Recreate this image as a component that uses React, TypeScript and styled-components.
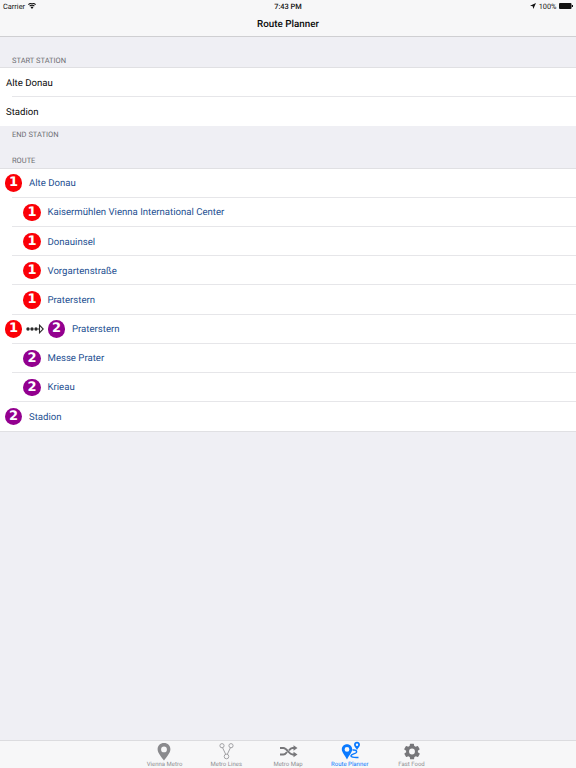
import React from "react";
import styled, { createGlobalStyle } from "styled-components";

const Global = createGlobalStyle`
  html, body { margin: 0; padding: 0; background: #efeff4; }
  body { font-family: Roboto, Inter, "Liberation Sans", sans-serif; text-rendering: geometricPrecision; }
`;

const Page = styled.div`
  width: 576px;
  height: 768px;
  display: flex;
  flex-direction: column;
  overflow: hidden;
  background: #efeff4;
`;

const Header = styled.header`
  height: 37px;
  flex: none;
  box-sizing: border-box;
  background: #f7f7f8;
  border-bottom: 1px solid #cfcfd2;
  display: flex;
  flex-direction: column;
`;

const StatusBar = styled.div`
  height: 12px;
  padding: 0 3px;
  display: grid;
  grid-template-columns: 1fr auto 1fr;
  align-items: center;
  font-size: 7.4px;
  color: #111;
`;

const StatusLeft = styled.div`
  display: flex;
  align-items: center;
  gap: 2.5px;
`;

const StatusRight = styled.div`
  display: flex;
  align-items: center;
  justify-content: flex-end;
  gap: 2.5px;
`;

const Clock = styled.div`
  font-weight: 500;
`;

const Title = styled.div`
  flex: 1;
  display: flex;
  align-items: center;
  justify-content: center;
  font-size: 9.8px;
  font-weight: 500;
  color: #0a0a0a;
`;

const Content = styled.main`
  flex: 1;
  min-height: 0;
`;

const SectionTitle = styled.div<{ $height: number }>`
  box-sizing: border-box;
  height: ${(p) => p.$height}px;
  padding: 0 12px 3.5px;
  display: flex;
  align-items: flex-end;
  font-size: 7.5px;
  color: #6d6d72;
`;

const List = styled.div<{ $closed?: boolean }>`
  background: #fff;
  box-shadow: 0 -1px 0 #e0e0e3${(p) => (p.$closed ? ", 0 1px 0 #e0e0e3" : "")};
`;

const Row = styled.div<{ $indent: number; $last?: boolean }>`
  height: 29.2px;
  box-sizing: border-box;
  position: relative;
  display: flex;
  align-items: center;
  padding-left: ${(p) => p.$indent}px;

  &::after {
    content: "";
    display: ${(p) => (p.$last ? "none" : "block")};
    position: absolute;
    left: 12px;
    right: 0;
    bottom: 0;
    height: 1px;
    background: #e6e6e9;
  }
`;

const PlainText = styled.span`
  display: block;
  padding-top: 2px;
  font-size: 9.6px;
  color: #0a0a0a;
`;

const StationText = styled.span`
  display: block;
  padding-top: 1px;
  margin-left: 6.75px;
  font-size: 9.6px;
  color: #1d4f91;
`;

const Badge = styled.span<{ $line: 1 | 2 }>`
  width: 17.5px;
  height: 17.5px;
  flex: none;
  border-radius: 50%;
  background: ${(p) => (p.$line === 1 ? "#fb0007" : "#93008f")};
  color: #fff;
  font-family: "DejaVu Sans", sans-serif;
  font-weight: 700;
  font-size: 13px;
  line-height: 17.5px;
  text-align: center;
`;

const TabBar = styled.nav`
  height: 28px;
  flex: none;
  box-sizing: border-box;
  background: #f7f7f8;
  border-top: 1px solid #dcdcdf;
  display: flex;
  justify-content: center;
`;

const Tab = styled.div<{ $active?: boolean }>`
  width: 61.75px;
  display: flex;
  flex-direction: column;
  align-items: center;
  color: ${(p) => (p.$active ? "#0a7aff" : "#8f8f92")};
  font-size: 6px;
  padding-top: 1px;
`;

const TabIcon = styled.svg`
  width: 20px;
  height: 19px;
  flex: none;
  overflow: visible;
`;

const TabLabel = styled.span`
  line-height: 7px;
  white-space: nowrap;
`;

const Pin = () => (
  <TabIcon viewBox="0 0 20 19">
    <path fillRule="evenodd" fill="#8a8a8d" d="M9 1C5.200 1 2.600 3.700 2.600 7.200 2.600 11 6.600 15 9 18.600 11.400 15 15.400 11 15.400 7.200 15.400 3.700 12.800 1 9 1ZM9 4.500a2.900 2.900 0 1 1 0 5.800 2.900 2.900 0 0 1 0-5.800Z" />
  </TabIcon>
);

const Lines = () => (
  <TabIcon viewBox="0 0 20 19" fill="none" stroke="#a2a2a5" strokeWidth="1">
    <circle cx="6" cy="3.700" r="2.100" />
    <circle cx="15" cy="3.700" r="2.100" />
    <circle cx="10.500" cy="14.500" r="2.300" />
    <path d="M6.600 5.800 9.700 12.300M14.400 5.800 11.300 12.300" />
  </TabIcon>
);

const Shuffle = () => (
  <TabIcon viewBox="0 0 20 19" fill="none" stroke="#77777a" strokeWidth="1.900">
    <path d="M2 6h3.500c3.500 0 5.500 6.500 9 6.500H16M2 12.500h3.500c1.500 0 2.500-1 3.500-2.500M11 8.300c1-1.300 2-2.300 3.500-2.300H16" />
    <path fill="#77777a" stroke="none" d="M15.500 3.300 19.500 6 15.500 8.700ZM15.500 9.800 19.500 12.500 15.500 15.200Z" />
  </TabIcon>
);

const RouteIcon = () => (
  <TabIcon viewBox="0 0 20 19">
    <path fillRule="evenodd" fill="#0a7aff" d="M7 2.300C4 2.300 1.800 4.500 1.800 7.300 1.800 10.300 5 13.500 7 17.500 9 13.500 12.200 10.300 12.200 7.300 12.200 4.500 10 2.300 7 2.300ZM7 5a2.400 2.400 0 1 1 0 4.800A2.400 2.400 0 0 1 7 5Z" />
    <path fillRule="evenodd" fill="#0a7aff" d="M17-.2C15.300-.2 14 1.100 14 2.800 14 4.500 15.900 6 17 8 18.100 6 20 4.500 20 2.800 20 1.100 18.700-.2 17-.2ZM17 1.600a1.200 1.200 0 1 1 0 2.400 1.200 1.200 0 0 1 0-2.400Z" />
    <path fill="none" stroke="#0a7aff" strokeWidth="1.500" d="M12.500 8c2.800-.5 5 .8 3.700 2.600-1.100 1.400-4.700 1.300-5.200 3-.3 1.200 2 2.300 7.500 1.900" />
  </TabIcon>
);

const Gear = () => (
  <TabIcon viewBox="0 0 24 24">
    <path fillRule="evenodd" fill="#77777a" d="M19.400 13a7.600 7.600 0 0 0 0-2l2.100-1.600a.5.500 0 0 0 .1-.6l-2-3.500a.5.500 0 0 0-.6-.2l-2.500 1a7.300 7.300 0 0 0-1.700-1l-.4-2.600a.5.500 0 0 0-.5-.4h-4a.5.500 0 0 0-.5.400l-.4 2.600a7.300 7.300 0 0 0-1.700 1l-2.500-1a.5.500 0 0 0-.6.200l-2 3.500a.5.500 0 0 0 .1.600L4.600 11a7.600 7.600 0 0 0 0 2l-2.100 1.600a.5.500 0 0 0-.1.600l2 3.500a.5.500 0 0 0 .6.200l2.500-1a7.300 7.300 0 0 0 1.700 1l.4 2.600a.5.500 0 0 0 .5.400h4a.5.500 0 0 0 .5-.400l.4-2.600a7.300 7.300 0 0 0 1.700-1l2.500 1a.5.500 0 0 0 .6-.2l2-3.500a.5.500 0 0 0-.1-.6ZM12 8.300a3.700 3.700 0 1 1 0 7.400 3.700 3.700 0 0 1 0-7.400Z" />
  </TabIcon>
);

const TransferIcon = styled.svg`
  width: 18px;
  height: 10px;
  flex: none;
  margin: 0 4px 0 3.5px;
`;

const Wifi = () => (
  <svg width="8" height="6" viewBox="0 0 8 6">
    <path fill="#111" d="M4 6 2.600 4.300a2 2 0 0 1 2.800 0ZM2 3.600l-.7-.8a4.100 4.100 0 0 1 5.400 0l-.7.800a3 3 0 0 0-4 0ZM.7 2.100 0 1.300a6.100 6.100 0 0 1 8 0l-.7.800a5 5 0 0 0-6.600 0Z" />
  </svg>
);

const LocationArrow = () => (
  <svg width="6" height="6" viewBox="0 0 6 6">
    <path fill="#111" d="M6 0 0 2.700 2.700 3.300 3.300 6Z" />
  </svg>
);

const Battery = () => (
  <svg width="14" height="6" viewBox="0 0 14 6">
    <rect width="12.500" height="6" rx="1" fill="#111" />
    <rect x="12.800" y="2" width="1.200" height="2" fill="#111" />
  </svg>
);

type Stop = { name: string; line: 1 | 2; nested?: boolean; last?: boolean; transfer?: boolean };

const stops: Stop[] = [
  { name: "Alte Donau", line: 1 },
  { name: "Kaisermühlen Vienna International Center", line: 1, nested: true },
  { name: "Donauinsel", line: 1, nested: true },
  { name: "Vorgartenstraße", line: 1, nested: true },
  { name: "Praterstern", line: 1, nested: true },
  { name: "Praterstern", line: 2, transfer: true },
  { name: "Messe Prater", line: 2, nested: true },
  { name: "Krieau", line: 2, nested: true },
  { name: "Stadion", line: 2, last: true },
];

export default function App() {
  return (
    <Page>
      <Global />
      <Header>
        <StatusBar>
          <StatusLeft>Carrier <Wifi /></StatusLeft>
          <Clock>7:43 PM</Clock>
          <StatusRight><LocationArrow /> 100% <Battery /></StatusRight>
        </StatusBar>
        <Title>Route Planner</Title>
      </Header>
      <Content>
        <SectionTitle $height={31}>START STATION</SectionTitle>
        <List>
          <Row $indent={6}><PlainText>Alte Donau</PlainText></Row>
          <Row $indent={6} $last><PlainText>Stadion</PlainText></Row>
        </List>
        <SectionTitle $height={16.2}>END STATION</SectionTitle>
        <SectionTitle $height={26}>ROUTE</SectionTitle>
        <List $closed>
          {stops.map((s, i) => (
            <Row key={i} $indent={s.nested ? 23.25 : 4.75} $last={s.last}>
              {s.transfer ? (
                <>
                  <Badge $line={1}>1</Badge>
                  <TransferIcon viewBox="0 0 18 10">
                    <circle cx="2" cy="5" r="1.700" fill="#2a2a2a" />
                    <circle cx="6" cy="5" r="1.700" fill="#2a2a2a" />
                    <circle cx="10" cy="5" r="1.700" fill="#2a2a2a" />
                    <path d="M11.500 5h2M13.500 1.200 17.200 5l-3.700 3.800Z" fill="none" stroke="#2a2a2a" strokeWidth="1.100" />
                  </TransferIcon>
                </>
              ) : null}
              <Badge $line={s.line}>{s.line}</Badge>
              <StationText>{s.name}</StationText>
            </Row>
          ))}
        </List>
      </Content>
      <TabBar>
        <Tab><Pin /><TabLabel>Vienna Metro</TabLabel></Tab>
        <Tab><Lines /><TabLabel>Metro Lines</TabLabel></Tab>
        <Tab><Shuffle /><TabLabel>Metro Map</TabLabel></Tab>
        <Tab $active><RouteIcon /><TabLabel>Route Planner</TabLabel></Tab>
        <Tab><Gear /><TabLabel>Fast Food</TabLabel></Tab>
      </TabBar>
    </Page>
  );
}
